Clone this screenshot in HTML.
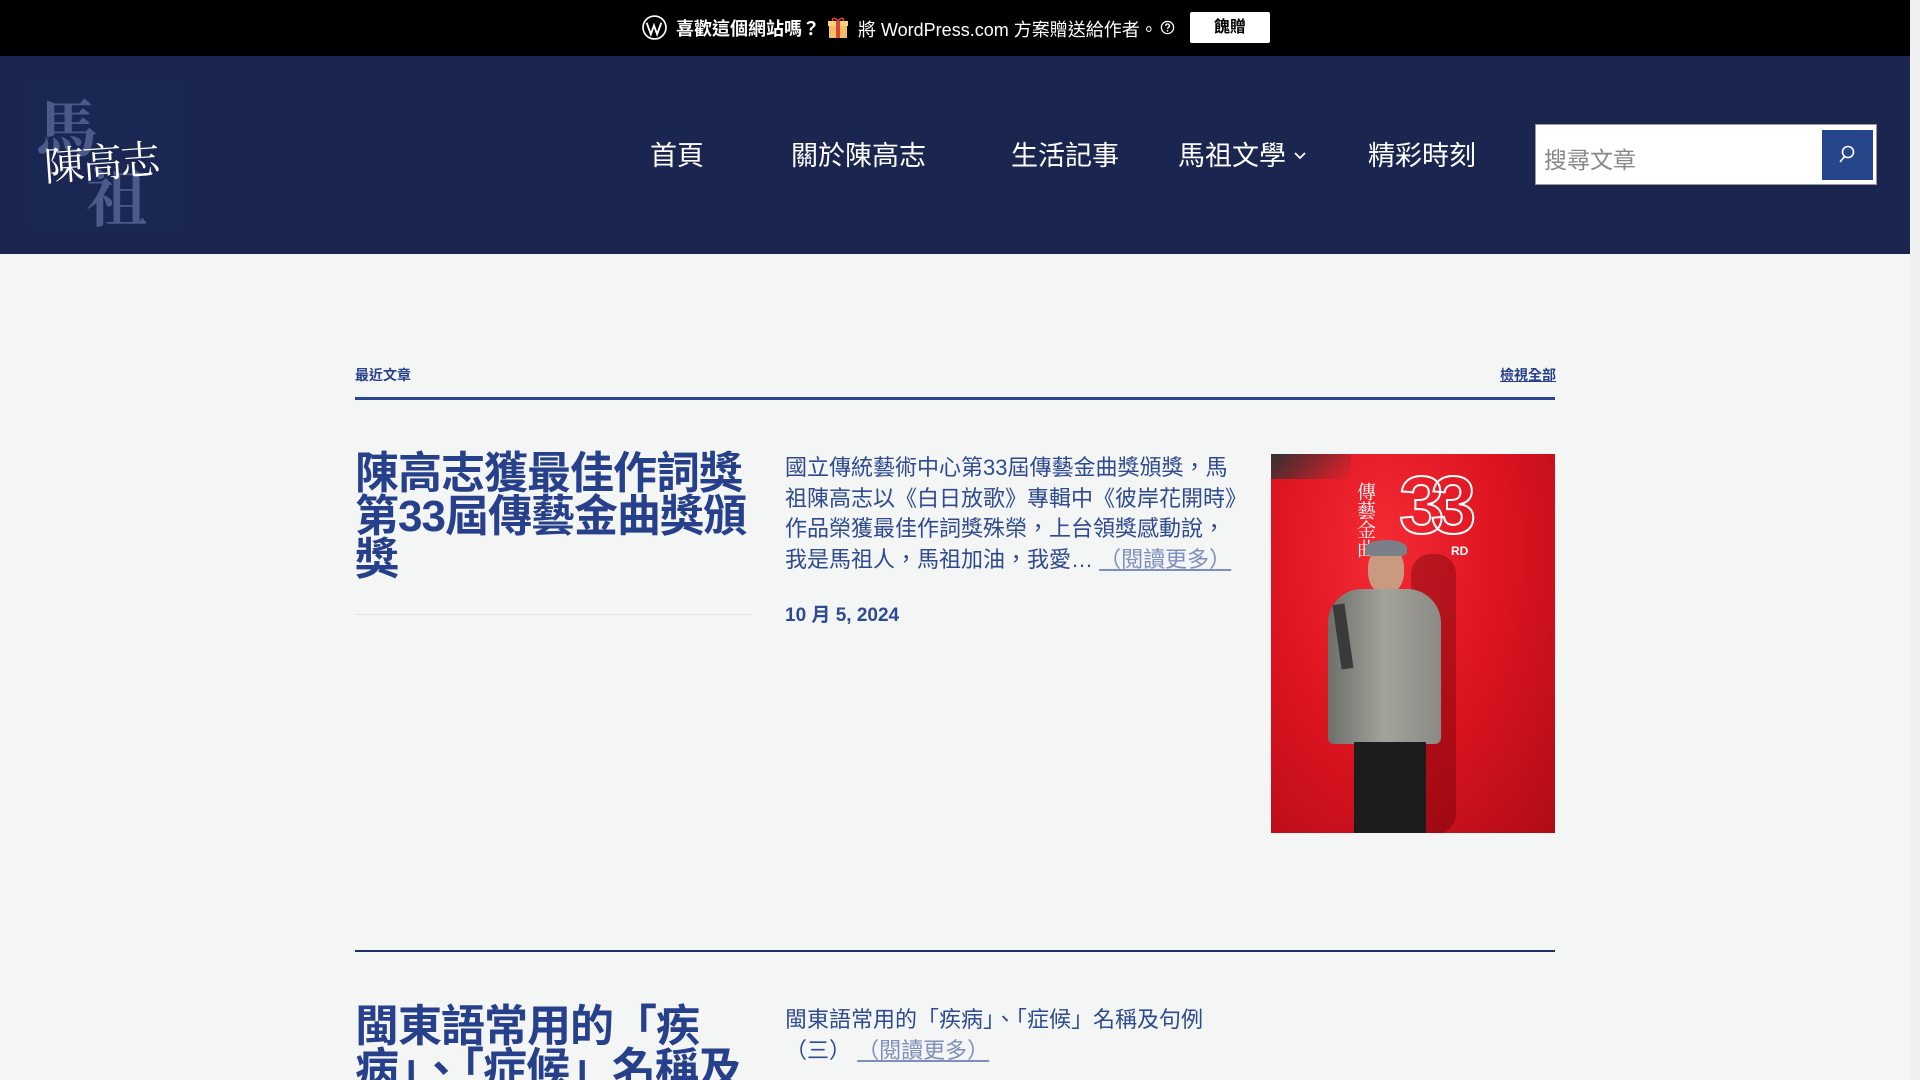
<!DOCTYPE html>
<html style="width:1920px;height:1080px;overflow:hidden"><head><meta charset="utf-8">
<style>
*{margin:0;padding:0;box-sizing:border-box}
body{width:1920px;height:1080px;overflow:hidden;background:#f4f5f5;font-family:"Liberation Sans","Noto Sans CJK TC",sans-serif;position:relative}
.a{position:absolute;white-space:nowrap}
#top{position:absolute;left:0;top:0;width:1920px;height:56px;background:#000}
#hdr{position:absolute;left:0;top:56px;width:1910px;height:198px;background:#1a2550}
#sb{position:absolute;left:1910px;top:0;width:10px;height:1080px;background:#f0f0f0}
.nav{color:#fff;font-size:27px;top:134px}
.t{color:#27408b;font-weight:bold;font-size:44px;line-height:43px;letter-spacing:-1px}
.ex{color:#2e4a90;font-size:22px;line-height:30.6px}
.more{color:#7f8fbd;text-decoration:underline}
</style></head><body>
<div id="top"></div>
<svg class="a" style="left:642px;top:15px" width="25" height="25" viewBox="0 0 24 24"><circle cx="12" cy="12" r="11" fill="none" stroke="#fff" stroke-width="1.6"/><path d="M4.5 7.5l4 11 3-8.5 3 8.5 4-11" fill="none" stroke="#fff" stroke-width="1.8"/></svg>
<div class="a" style="left:676px;top:15px;color:#fff;font-weight:bold;font-size:18px">喜歡這個網站嗎？</div>
<svg class="a" style="left:828px;top:17px" width="20" height="21" viewBox="0 0 20 21"><rect x="1" y="6" width="18" height="15" fill="#f5c060"/><rect x="0" y="4" width="20" height="5" fill="#f9d27a"/><rect x="8" y="4" width="4" height="17" fill="#d9453c"/><path d="M10 4C7 0 3 1 5 4M10 4c3-4 7-3 5 0" fill="none" stroke="#d9453c" stroke-width="1.5"/></svg>
<div class="a" style="left:858px;top:16px;color:#fff;font-size:18px">將 WordPress.com 方案贈送給作者。</div>
<svg class="a" style="left:1160px;top:20px" width="15" height="15" viewBox="0 0 16 16"><circle cx="8" cy="8" r="6.5" fill="none" stroke="#fff" stroke-width="1.4"/><path d="M6 6.3a2 2 0 1 1 2.8 1.8c-.6.3-.8.7-.8 1.4" fill="none" stroke="#fff" stroke-width="1.4"/><circle cx="8" cy="11.5" r=".9" fill="#fff"/></svg>
<div class="a" style="left:1190px;top:12px;width:80px;height:31px;background:#fff;border-radius:2px;color:#000;font-weight:bold;font-size:16px;text-align:center;line-height:31px">餽贈</div>
<div id="hdr"></div>
<div id="sb"></div>
<div class="a" style="left:30px;top:80px;width:155px;height:150px;background:#1b2753"></div>
<div class="a" style="left:36px;top:80px;font-family:'Noto Serif CJK SC',serif;font-size:62px;color:#4a5a8a;font-weight:bold">馬</div>
<div class="a" style="left:86px;top:150px;font-family:'Noto Serif CJK SC',serif;font-size:62px;color:#4a5a8a;font-weight:bold">祖</div>
<div class="a" style="left:44px;top:132px;font-family:'Noto Serif CJK SC',serif;font-size:40px;color:#fff;letter-spacing:-2px;transform:rotate(-4deg)">陳高志</div>
<div class="a nav" style="left:650px">首頁</div>
<div class="a nav" style="left:791px">關於陳高志</div>
<div class="a nav" style="left:1011px">生活記事</div>
<div class="a nav" style="left:1178px">馬祖文學</div>
<svg class="a" style="left:1293px;top:151px" width="14" height="10" viewBox="0 0 14 10"><path d="M2 2l5 5 5-5" fill="none" stroke="#fff" stroke-width="1.8"/></svg>
<div class="a nav" style="left:1368px">精彩時刻</div>
<div class="a" style="left:1535px;top:124px;width:342px;height:61px;background:#fff;border:1px solid #999"></div>
<div class="a" style="left:1544px;top:141px;font-size:23px;color:#888">搜尋文章</div>
<div class="a" style="left:1822px;top:130px;width:51px;height:50px;background:#27458a"></div>
<svg class="a" style="left:1837px;top:144px" width="20" height="22" viewBox="0 0 20 22"><circle cx="11" cy="8" r="5.5" fill="none" stroke="#fff" stroke-width="1.6"/><path d="M7.5 12.5L3 18" stroke="#fff" stroke-width="1.6"/></svg>

<div class="a" style="left:355px;top:365px;font-size:14px;font-weight:bold;color:#27408b">最近文章</div>
<div class="a" style="left:1500px;top:365px;font-size:14px;font-weight:bold;color:#27408b;text-decoration:underline">檢視全部</div>
<div class="a" style="left:355px;top:397px;width:1200px;height:3px;background:#2a4690"></div>

<div class="a t" style="left:355px;top:452px;width:410px;white-space:normal">陳高志獲最佳作詞獎第33屆傳藝金曲獎頒獎</div>
<div class="a" style="left:355px;top:614px;width:397px;height:1px;background:#e2e4e6"></div>
<div class="a ex" style="left:785px;top:453px;width:455px;white-space:normal">國立傳統藝術中心第33屆傳藝金曲獎頒獎，馬祖陳高志以《白日放歌》專輯中《彼岸花開時》作品榮獲最佳作詞獎殊榮，上台領獎感動說，我是馬祖人，馬祖加油，我愛… <span class="more">（閱讀更多）</span></div>
<div class="a" style="left:785px;top:600px;font-size:19px;font-weight:bold;color:#2e4a90">10 月 5, 2024</div>

<div class="a" style="left:1271px;top:454px;width:284px;height:379px;background:radial-gradient(ellipse at 40% 25%,#f42a34 0%,#dc1420 50%,#b00c16 100%);overflow:hidden">
 <div class="a" style="left:0;top:0;width:80px;height:25px;background:linear-gradient(135deg,#333,transparent)"></div>
 <div class="a" style="left:85px;top:28px;color:#fff;font-size:19px;line-height:21px;writing-mode:vertical-rl;font-family:'Noto Serif CJK SC',serif">傳藝金曲</div>
 <div class="a" style="left:128px;top:5px;color:transparent;-webkit-text-stroke:2px #fff;font-size:82px;font-weight:bold;letter-spacing:-14px">33</div>
 <div class="a" style="left:180px;top:90px;color:#fff;font-size:12px;font-weight:bold">RD</div>
 <div class="a" style="left:140px;top:100px;width:45px;height:280px;background:rgba(90,0,5,.35);border-radius:20px"></div>
 <div class="a" style="left:97px;top:92px;width:36px;height:48px;border-radius:45%;background:#c99a80"></div>
 <div class="a" style="left:94px;top:86px;width:42px;height:16px;border-radius:50% 50% 20% 20%;background:#7a7f88"></div>
 <div class="a" style="left:57px;top:135px;width:113px;height:155px;border-radius:34px 34px 6px 6px;background:linear-gradient(90deg,#6f6f6a,#a3a39c,#8a8a84)"></div>
 <div class="a" style="left:83px;top:288px;width:72px;height:95px;background:#1c1c1c"></div>
 <div class="a" style="left:66px;top:150px;width:12px;height:65px;background:#3a3a3a;transform:rotate(-8deg)"></div>
</div>

<div class="a" style="left:355px;top:950px;width:1200px;height:2px;background:#1f2f6a"></div>
<div class="a t" style="left:355px;top:1005px;width:410px;white-space:normal">閩東語常用的「疾病」、「症候」名稱及句例</div>
<div class="a ex" style="left:785px;top:1005px;width:455px;white-space:normal">閩東語常用的「疾病」、「症候」名稱及句例（三） <span class="more">（閱讀更多）</span></div>
</body></html>
